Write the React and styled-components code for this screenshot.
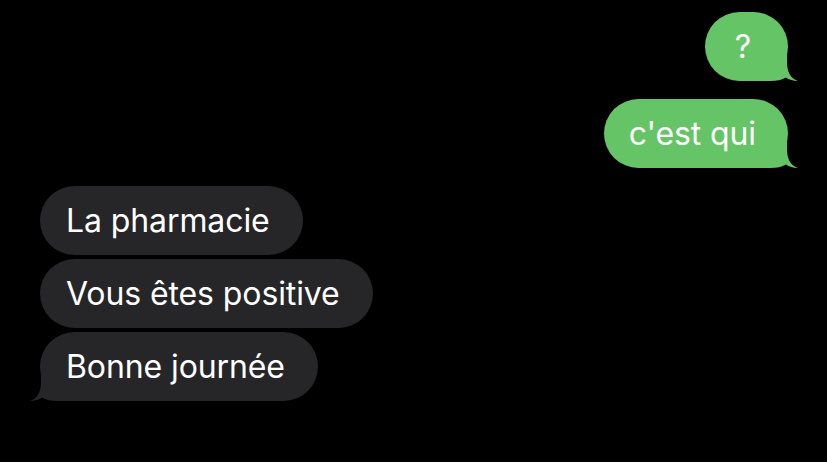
import React from "react";
import styled, { createGlobalStyle } from "styled-components";

const Global = createGlobalStyle`
  html, body {
    margin: 0;
    padding: 0;
    background: #000;
  }
  body {
    font-family: Inter, "Noto Sans", "Liberation Sans", sans-serif;
  }
`;

const GREEN = "#65c466";
const GRAY = "#262628";

const Thread = styled.div`
  width: 827px;
  height: 462px;
  box-sizing: border-box;
  padding: 12px 39px 0 40px;
  display: flex;
  flex-direction: column;
  background: #000;
  overflow: hidden;
`;

const Group = styled.div`
  display: flex;
  flex-direction: column;
  align-items: ${p => (p.$sent ? "flex-end" : "flex-start")};
  gap: 4px;
  margin-bottom: 18px;
`;

const Bubble = styled.div`
  position: relative;
  height: 69px;
  box-sizing: border-box;
  display: flex;
  align-items: center;
  justify-content: center;
  min-width: ${p => p.$min || 0}px;
  padding: 0 ${p => (p.$sent ? "32px" : "33px")} 0 ${p => (p.$sent ? "25px" : "26px")};
  border-radius: 35px;
  background: ${p => (p.$sent ? GREEN : GRAY)};
  color: #fff;
  font-size: 32px;
  letter-spacing: -0.1px;
  white-space: nowrap;
`;

const Label = styled.span`
  position: relative;
  z-index: 1;
`;

const Tail = styled.svg`
  position: absolute;
  bottom: 0;
  width: 47px;
  height: 30px;
  z-index: 0;
  ${p => (p.$sent ? "right: -11px;" : "left: -11px; transform: scaleX(-1);")}
`;

function BubbleTail({ sent }) {
  return (
    <Tail $sent={sent} viewBox="0 0 47 30">
      <path
        d="M0 0 L35 0 L35 10 C35 21 38 27 46 30 C41 30 37 28.5 34 26.5 C30 29 25 30 18 30 L0 30 Z"
        fill={sent ? GREEN : GRAY}
      />
    </Tail>
  );
}

function Message({ text, sent, tail, min }) {
  return (
    <Bubble $sent={sent} $min={min}>
      <Label>{text}</Label>
      {tail && <BubbleTail sent={sent} />}
    </Bubble>
  );
}

export default function App() {
  return (
    <>
      <Global />
      <Thread>
        <Group $sent>
          <Message sent tail text="?" min={83} />
        </Group>
        <Group $sent>
          <Message sent tail text="c'est qui" />
        </Group>
        <Group>
          <Message text="La pharmacie" />
          <Message text="Vous êtes positive" />
          <Message tail text="Bonne journée" />
        </Group>
      </Thread>
    </>
  );
}
